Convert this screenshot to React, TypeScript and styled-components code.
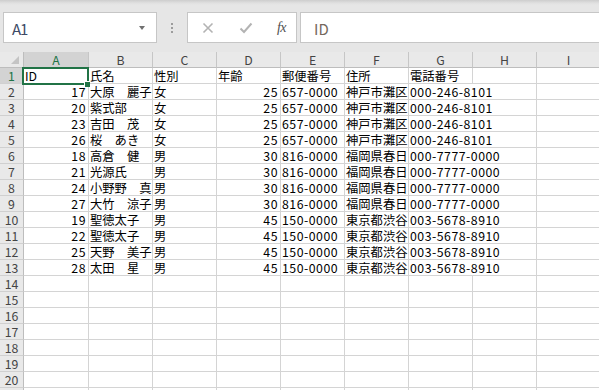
import React from "react";
import styled, { createGlobalStyle } from "styled-components";

const GlobalStyle = createGlobalStyle`
  html, body {
    margin: 0;
    padding: 0;
    background: #ffffff;
    overflow: hidden;
  }
  body {
    font-family: "Noto Sans CJK JP", "Noto Sans", sans-serif;
  }
`;

const JP = `"Noto Sans CJK JP", "Noto Sans", sans-serif`;
const GREEN = "#217346";
const GRID = "#d4d4d4";

type Row = string[];

const header: Row = ["ID", "氏名", "性別", "年齢", "郵便番号", "住所", "電話番号"];

// only the part of the address that is visible before column G
const kobe = ["657-0000", "神戸市灘区", "000-246-8101"];
const fukuoka = ["816-0000", "福岡県春日", "000-7777-0000"];
const tokyo = ["150-0000", "東京都渋谷", "003-5678-8910"];

const data: Row[] = [
  ["17", "大原　麗子", "女", "25", ...kobe],
  ["20", "紫式部", "女", "25", ...kobe],
  ["23", "吉田　茂", "女", "25", ...kobe],
  ["26", "桜　あき", "女", "25", ...kobe],
  ["18", "高倉　健", "男", "30", ...fukuoka],
  ["21", "光源氏", "男", "30", ...fukuoka],
  ["24", "小野野　真", "男", "30", ...fukuoka],
  ["27", "大竹　涼子", "男", "30", ...fukuoka],
  ["19", "聖徳太子", "男", "45", ...tokyo],
  ["22", "聖徳太子", "男", "45", ...tokyo],
  ["25", "天野　美子", "男", "45", ...tokyo],
  ["28", "太田　星", "男", "45", ...tokyo],
];

const columns = ["A", "B", "C", "D", "E", "F", "G", "H", "I"];
const TOTAL_ROWS = 21;

const isNumber = (v: string) => /^\d+$/.test(v);
const isAscii = (v: string) => /^[\x20-\x7e]+$/.test(v);

export default function App() {
  const rows: Row[] = [header, ...data];

  return (
    <>
      <GlobalStyle />
      <Page>
        <Toolbar>
          <NameBox>
            <NameText>A1</NameText>
            <DropArrow />
          </NameBox>
          <Grip>
            <Dot />
            <Dot />
            <Dot />
          </Grip>
          <FxBox>
            <IconSlot>
              <svg width="12" height="12" viewBox="0 0 12 12">
                <path d="M1.5 1.5 L10.5 10.5 M10.5 1.5 L1.5 10.5" stroke="#b3b3b3" strokeWidth="1.6" fill="none" />
              </svg>
            </IconSlot>
            <IconSlot>
              <svg width="14" height="12" viewBox="0 0 14 12">
                <path d="M1.5 6.5 L5 10 L12.5 1.5" stroke="#b3b3b3" strokeWidth="2" fill="none" />
              </svg>
            </IconSlot>
            <FxText>fx</FxText>
          </FxBox>
          <FormulaBox>
            <FormulaText>ID</FormulaText>
          </FormulaBox>
        </Toolbar>

        <Sheet>
          <Corner>
            <svg width="9" height="9" viewBox="0 0 9 9">
              <path d="M8 0 L8 8 L0 8 Z" fill="#c4c4c4" />
            </svg>
          </Corner>
          {columns.map((c) => (
            <ColHead key={c} $selected={c === "A"}>
              {c}
            </ColHead>
          ))}

          {Array.from({ length: TOTAL_ROWS }, (_, r) => {
            const row = rows[r];
            const cells: React.ReactNode[] = [];
            cells.push(
              <RowHead key="h" $selected={r === 0}>
                {r + 1}
              </RowHead>
            );
            for (let c = 0; c < columns.length; c++) {
              const value = row && c < row.length ? row[c] : "";
              // long phone numbers spill over the empty H column
              const wide = c === 6 && value.length > 10;
              cells.push(
                <Cell
                  key={c}
                  $right={r > 0 && isNumber(value)}
                  $ascii={r > 0 && isAscii(value)}
                  $span={wide ? 2 : 1}
                >
                  {value}
                </Cell>
              );
              if (wide) c++;
            }
            return <React.Fragment key={r}>{cells}</React.Fragment>;
          })}

          <Selection />
          <FillHandle />
        </Sheet>
      </Page>
    </>
  );
}

const Page = styled.div`
  width: 599px;
  height: 390px;
  overflow: hidden;
  background: #ffffff;
`;

const Toolbar = styled.div`
  height: 52px;
  box-sizing: border-box;
  padding: 12px 0 0 3px;
  display: flex;
  align-items: flex-start;
  background: linear-gradient(#cdcdcd 0px, #e0e0e0 3px, #e6e6e6 5px, #e6e6e6 100%);
`;

const Box = styled.div`
  height: 31px;
  box-sizing: border-box;
  background: #ffffff;
  border: 1px solid #c6c6c6;
  display: flex;
  align-items: center;
`;

const NameBox = styled(Box)`
  width: 154px;
  padding: 0 8px 0 8px;
  justify-content: space-between;
`;

const NameText = styled.span`
  font-family: ${JP};
  font-size: 15px;
  letter-spacing: -1px;
  color: #3d4a66;
  padding-top: 1px;
`;

const DropArrow = styled.span`
  width: 0;
  height: 0;
  margin-right: 3px;
  border-left: 3.5px solid transparent;
  border-right: 3.5px solid transparent;
  border-top: 4px solid #707070;
`;

const Grip = styled.div`
  width: 30px;
  height: 31px;
  display: flex;
  flex-direction: column;
  align-items: center;
  justify-content: center;
  gap: 2px;
`;

const Dot = styled.span`
  width: 2px;
  height: 2px;
  background: #9c9c9c;
`;

const FxBox = styled(Box)`
  width: 110px;
  padding: 0 10px 0 13px;
  justify-content: space-between;
`;

const IconSlot = styled.span`
  display: flex;
  align-items: center;
  justify-content: center;
  width: 14px;
  height: 14px;
`;

const FxText = styled.span`
  font-family: "Liberation Serif", "DejaVu Serif", serif;
  font-style: italic;
  font-size: 14px;
  color: #505050;
  letter-spacing: -0.5px;
`;

const FormulaBox = styled(Box)`
  flex: 1;
  margin-left: 3px;
  margin-right: -2px;
  padding-left: 13px;
`;

const FormulaText = styled.span`
  font-family: ${JP};
  font-size: 15px;
  color: #75685c;
  padding-top: 1px;
`;

const Sheet = styled.div`
  position: relative;
  display: grid;
  grid-template-columns: 24px 65px repeat(8, 64px);
  grid-auto-rows: 16px;
`;

const Corner = styled.div`
  box-sizing: border-box;
  background: #e9e9e9;
  border-right: 1px solid #bdbdbd;
  border-bottom: 1px solid #bdbdbd;
  display: flex;
  align-items: flex-end;
  justify-content: flex-end;
  padding: 0 3px 2px 0;
`;

const HeadBase = styled.div<{ $selected?: boolean }>`
  box-sizing: border-box;
  font-family: ${JP};
  font-size: 12.3px;
  line-height: 15px;
  padding-top: 1px;
  text-align: center;
  color: ${(p) => (p.$selected ? GREEN : "#444444")};
  background: ${(p) => (p.$selected ? "#d3d3d3" : "#e9e9e9")};
`;

const ColHead = styled(HeadBase)`
  border-right: 1px solid #c6c6c6;
  border-bottom: 1px solid #bdbdbd;
`;

const RowHead = styled(HeadBase)`
  border-right: 1px solid #bdbdbd;
  border-bottom: 1px solid #d0d0d0;
`;

const Cell = styled.div<{ $right?: boolean; $ascii?: boolean; $span?: number }>`
  box-sizing: border-box;
  grid-column: span ${(p) => p.$span ?? 1};
  border-right: 1px solid ${GRID};
  border-bottom: 1px solid ${GRID};
  padding: 1px ${(p) => (p.$right ? "2px" : "0")} 0 1px;
  font-family: ${JP};
  font-size: 12.3px;
  line-height: 15px;
  letter-spacing: ${(p) => (p.$ascii ? "0.5px" : "0")};
  color: #000000;
  white-space: nowrap;
  overflow: hidden;
  text-align: ${(p) => (p.$right ? "right" : "left")};
`;

const Selection = styled.div`
  position: absolute;
  left: 22px;
  top: 15px;
  width: 67px;
  height: 18px;
  box-sizing: border-box;
  border: 2px solid ${GREEN};
  pointer-events: none;
`;

const FillHandle = styled.div`
  position: absolute;
  left: 84px;
  top: 29px;
  width: 5px;
  height: 5px;
  background: ${GREEN};
  border: 1px solid #ffffff;
  border-right: none;
  border-bottom: none;
`;
